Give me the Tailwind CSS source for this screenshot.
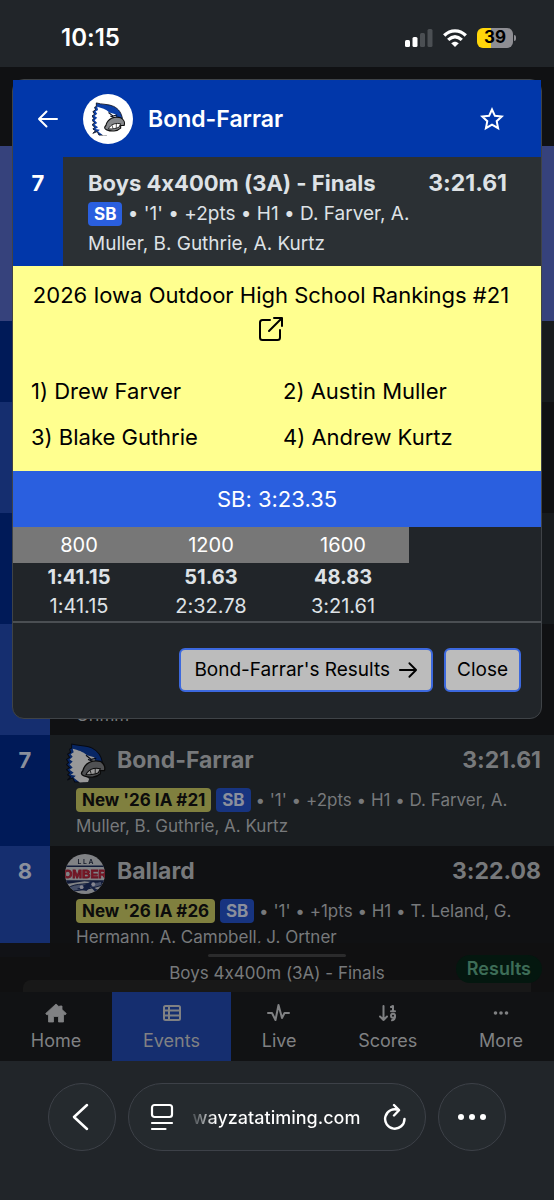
<!DOCTYPE html>
<html lang="en">
<head>
<meta charset="utf-8">
<meta name="viewport" content="width=device-width, initial-scale=1">
<title>Wayzata Timing</title>
<script src="https://cdn.jsdelivr.net/npm/@tailwindcss/browser@4"></script>
</head>
<body class="flex min-h-screen flex-col bg-[#212529] font-['Inter',sans-serif] text-[#dee2e6] [font-feature-settings:'calt'_0]">

<svg class="hidden" aria-hidden="true">
  <symbol id="bird" viewBox="0 0 38 39">
    <path d="M5 1C11 3 19 2 25 5C31 8 34 13 35 19L25 22L17 38L8 38L6 34L1 36L4 33L1 31L3 29L0 26L3 24L0 21L2 19L0 16L3 14L1 11L4 9L3 6L5 5Z" fill="#0b3fa8" stroke="#0a0f1e" stroke-width="1" stroke-linejoin="round"/>
    <path d="M6 5.500C11 7 16 8 20 12L27 14L28 18L20 24L17 30L22 35L21 38L13 38.500L7 34L9 32L4 31L7 29L3 26L6 24L3 21L6 18L3 16L6 13.500L4 11L7 9Z" fill="#fff"/>
    <path d="M19 12L24 16L29 15M21 16L26 18" stroke="#0a0f1e" stroke-width="1.200" fill="none"/>
    <path d="M16 27C18 19 26 16 33 18C37 20 38 24 37 27L33 27L33 30C29 34 22 34 17 32C14 31 14 29 16 27Z" fill="#85878a" stroke="#111" stroke-width="1.300"/>
    <path d="M20 29C23 25 28 24 33 25L31 29C28 30.500 24 31 19 31Z" fill="#fff" stroke="#111" stroke-width="1"/>
    <path d="M23 26.500L24 30M28 25L28 30" stroke="#111" stroke-width="0.800" fill="none"/>
  </symbol>
  <symbol id="arrow" viewBox="0 0 22 20">
    <path d="M2 10H20M12.500 2.500L20 10L12.500 17.500" fill="none" stroke="currentColor" stroke-width="2" stroke-linecap="round" stroke-linejoin="round"/>
  </symbol>
</svg>

<header class="flex h-[67px] shrink-0 items-center justify-between pt-2 pr-[38px] pl-[61px] text-white">
  <time class="text-[24px] font-semibold">10:15</time>
  <div class="flex items-center gap-2.5">
    <svg class="h-[18px] w-7" viewBox="0 0 28 18" aria-label="Signal">
      <rect x="0" y="11" width="5" height="7" rx="1.500" fill="#fff"/><rect x="7.500" y="8" width="5" height="10" rx="1.500" fill="#fff"/>
      <rect x="15" y="4" width="5" height="14" rx="1.500" fill="#4b4f53"/><rect x="22.500" y="0" width="5" height="18" rx="1.500" fill="#4b4f53"/>
    </svg>
    <svg class="h-[18px] w-6" viewBox="0 0 24 18" aria-label="Wi-Fi" fill="none" stroke="#fff" stroke-width="3.300">
      <path d="M1.200 6.500C7.500 0.300 16.500 0.300 22.800 6.500"/><path d="M5.200 10.900C9.500 6.900 14.500 6.900 18.800 10.900"/>
      <path d="M8.200 14.300C10.500 12.200 13.500 12.200 15.800 14.300L12 18Z" fill="#fff" stroke="none"/>
    </svg>
    <div class="flex items-center gap-px">
      <span class="flex h-5 w-9 items-center justify-center rounded-md bg-linear-to-r from-[#ffd60a] from-40% to-[#8e8e93] to-40% text-[17px] font-bold text-black">39</span>
      <span class="h-1.5 w-0.5 rounded-r bg-[#8e8e93]"></span>
    </div>
  </div>
</header>

<main class="relative flex flex-1 flex-col bg-[#101113]">
  <!-- Results list behind the dialog -->
  <div class="h-[79px] bg-[#101113]"></div>
  <div class="h-[175px] bg-[#36427c]"></div>
  <ol class="text-[#77797b]">
    <li class="flex h-[81px] bg-[#171b1e]"><span class="w-[50px] bg-[#001a58]"></span></li>
    <li class="flex h-[111px] bg-[#101113]"><span class="w-[50px] bg-[#152e6f]"></span></li>
    <li class="flex h-[111px] bg-[#171b1e]"><span class="w-[50px] bg-[#001a58]"></span></li>
    <li class="flex h-[111px] bg-[#101113]"><span class="w-[50px] bg-[#152e6f]"></span><span class="self-end pb-2 pl-[26px] text-[17px] leading-6">Grimm</span></li>
    <li class="flex h-[111px] bg-[#1a1e21]">
      <span class="w-[50px] shrink-0 bg-[#001a58] pt-2.5 text-center text-[22px] leading-[30px] font-bold text-[#8a8f9c]">7</span>
      <div class="flex-1 pt-2 pr-[13px]">
        <div class="flex items-center pl-4">
          <svg class="size-10 brightness-60" aria-hidden="true"><use href="#bird"/></svg>
          <h3 class="flex-1 pb-1.5 pl-[11px] text-[23px] leading-[30px] font-bold">Bond-Farrar</h3>
          <span class="pb-1.5 text-[23px] leading-[30px] font-bold">3:21.61</span>
        </div>
        <p class="mt-1 pr-4 pl-[26px] text-[17px] leading-[26px]"><b class="inline-block rounded bg-[#80803f] px-1.5 leading-6 text-[#0c0c0c]">New '26 IA #21</b> <b class="inline-block rounded bg-[#173480] px-1.5 leading-6 text-[#8a8f9c]">SB</b> • '1' • +2pts • H1 • D. Farver, A. Muller, B. Guthrie, A. Kurtz</p>
      </div>
    </li>
    <li class="flex h-[111px] bg-[#101113]">
      <span class="w-[50px] shrink-0 bg-[#152e6f] pt-2.5 text-center text-[22px] leading-[30px] font-bold text-[#8a8f9c]">8</span>
      <div class="flex-1 pt-2 pr-[13px]">
        <div class="flex items-center pl-[15px]">
          <svg class="size-10 brightness-60" viewBox="0 0 41 41" aria-hidden="true">
            <clipPath id="disc"><circle cx="20.500" cy="20.500" r="20.500"/></clipPath>
            <g clip-path="url(#disc)">
              <rect width="41" height="41" fill="#d5d8de"/>
              <text x="21" y="10" text-anchor="middle" font-size="7" font-weight="600" fill="#222b44">L L A</text>
              <path d="M0 12.500H41" stroke="#1c2c5c" stroke-width="1.500"/>
              <text x="20.500" y="25" text-anchor="middle" font-family="Liberation Sans" font-size="12" font-weight="bold" fill="#d3293d" stroke="#b01f38" stroke-width="0.800">OMBER</text>
              <path d="M0 27H41V30L20 28L0 31Z" fill="#1c2c5c"/>
              <path d="M3 35C10 29 25 32 37 28L38 32C29 35 18 37 8 38Z" fill="#7484ad" stroke="#1c2c5c"/>
              <path d="M12 36L27 28L31 29L22 38ZM25 32L34 37L31 39Z" fill="#22346b"/>
              <circle cx="17" cy="34" r="2" fill="#dde"/><circle cx="29" cy="31" r="2" fill="#dde"/>
            </g>
          </svg>
          <h3 class="flex-1 pb-1.5 pl-3 text-[23px] leading-[30px] font-bold">Ballard</h3>
          <span class="pb-1.5 text-[23px] leading-[30px] font-bold">3:22.08</span>
        </div>
        <p class="mt-1 pr-4 pl-[26px] text-[17px] leading-[26px]"><b class="inline-block rounded bg-[#80803f] px-1.5 leading-6 text-[#0c0c0c]">New '26 IA #26</b> <b class="inline-block rounded bg-[#173480] px-1.5 leading-6 text-[#8a8f9c]">SB</b> • '1' • +1pts • H1 • T. Leland, G. Hermann, A. Campbell, J. Ortner</p>
      </div>
    </li>
  </ol>

  <!-- Bottom sheet peek -->
  <div class="relative -mt-3.5 h-[49px] bg-[#111111]/95">
    <div class="absolute inset-x-[23px] bottom-0 h-3 rounded-tl-lg bg-[#181818]"></div>
    <div class="relative flex flex-col items-center pt-[11px]">
      <div class="h-[3px] w-[138px] rounded bg-[#2b2b2c]"></div>
      <p class="pt-1 text-[17px] leading-6 text-[#77797b]">Boys 4x400m (3A) - Finals</p>
    </div>
    <span class="absolute top-3 right-3 rounded-full bg-[#04170f] px-[11px] text-[18px] leading-7 font-semibold text-[#3d6d57]">Results</span>
  </div>

  <nav class="flex h-[69px] bg-[#111214] text-[18px] text-[#808183]">
    <a href="#home" class="flex flex-auto flex-col items-center gap-1 pt-[11px]">
      <svg class="h-5 w-[22px]" viewBox="0 0 22 20" fill="currentColor"><path d="M11 1L14.500 4.200V3H17V6.500L21.300 10.500L20 12L18.500 11V19H13.500V13.500H8.500V19H3.500V11L2 12L0.700 10.500Z" stroke="currentColor" stroke-linejoin="round" stroke-width="0.800"/></svg>
      Home</a>
    <a href="#events" class="flex flex-auto flex-col items-center gap-1 bg-[#152e6f] pt-[11px]">
      <svg class="h-5 w-5" viewBox="0 0 20 20" fill="none" stroke="currentColor" stroke-width="2"><rect x="2" y="3" width="16" height="14" rx="1.500"/><path d="M2 7.500H18M2 12.500H18M7 3V17"/></svg>
      Events</a>
    <a href="#live" class="flex flex-auto flex-col items-center gap-1 pt-[11px]">
      <svg class="h-5 w-6" viewBox="0 0 24 20" fill="none" stroke="currentColor" stroke-width="2" stroke-linecap="round" stroke-linejoin="round"><path d="M1 10H5L8.500 17L11.500 2L15 15L17.500 10H22"/></svg>
      Live</a>
    <a href="#scores" class="flex flex-auto flex-col items-center gap-1 pt-[11px]">
      <svg class="h-5 w-5" viewBox="0 0 20 20" fill="none" stroke="currentColor" stroke-width="2" stroke-linecap="round" stroke-linejoin="round"><path d="M5.500 3V17M2 13.500L5.500 17L9 13.500M13 4L15 3V8M13 8.300H17"/><circle cx="15" cy="12.700" r="2"/><path d="M17 13C17 15.500 16 17 14 17.300"/></svg>
      Scores</a>
    <a href="#more" class="flex flex-auto flex-col items-center gap-1 pt-[11px]">
      <svg class="h-5 w-5" viewBox="0 0 20 20" fill="currentColor"><circle cx="4.500" cy="10" r="1.800"/><circle cx="10" cy="10" r="1.800"/><circle cx="15.500" cy="10" r="1.800"/></svg>
      More</a>
  </nav>

  <!-- Team dialog -->
  <section role="dialog" aria-label="Bond-Farrar" class="absolute inset-x-3 top-3 rounded-xl border border-[#3f4347] bg-[#212529]">
    <div class="flex h-[77px] items-center bg-[#0137aa] pt-px pr-[37px] pl-6 text-white">
      <button type="button" aria-label="Back"><svg class="h-5 w-[22px] rotate-180"><use href="#arrow"/></svg></button>
      <span class="ml-6 flex size-[50px] items-center justify-center rounded-full bg-white"><svg class="h-[34px] w-[33px]" aria-hidden="true"><use href="#bird"/></svg></span>
      <h2 class="ml-[15px] flex-1 text-[23px] font-semibold">Bond-Farrar</h2>
      <button type="button" aria-label="Favorite"><svg class="size-6" viewBox="0 0 24 24" fill="none" stroke="currentColor" stroke-width="2"><path d="M12 2.500L14.900 8.800L21.800 9.500L16.700 14.200L18.100 21.200L12 17.700L5.900 21.200L7.300 14.200L2.200 9.500L9.100 8.800Z"/></svg></button>
    </div>
    <div class="flex h-[109px] bg-[#2b3034]">
      <span class="w-[50px] shrink-0 bg-[#0137aa] pt-[11px] text-center text-[22px] leading-[30px] font-bold text-white">7</span>
      <div class="flex-1 pt-[11px] pr-[34px] pl-[25px]">
        <div class="flex justify-between leading-[30px] font-bold"><h3 class="text-[22px]">Boys 4x400m (3A) - Finals</h3><span class="text-[23px]">3:21.61</span></div>
        <p class="pt-px pr-16 text-[19px] leading-[30px]"><b class="inline-block rounded bg-[#2a5fdf] px-1.5 text-[17px] leading-6 text-white">SB</b> • '1' • +2pts • H1 • D. Farver, A. Muller, B. Guthrie, A. Kurtz</p>
      </div>
    </div>
    <div class="h-[205px] bg-[#ffff8f] px-[18px] pt-3 text-[22px] text-black">
      <a href="#rankings" class="flex flex-col items-center pr-3 leading-[34px]">2026 Iowa Outdoor High School Rankings #21
        <svg class="mt-1 size-[26px]" viewBox="0 0 26 26" fill="none" stroke="currentColor" stroke-width="2" stroke-linecap="round" stroke-linejoin="round"><path d="M12 4H4.500Q2 4 2 6.500V21.500Q2 24 4.500 24H19.500Q22 24 22 21.500V14M11 15L24 2M16 2H24V10"/></svg>
      </a>
      <ul class="mt-[26px] grid grid-cols-2 gap-x-3 leading-[46px]">
        <li>1) Drew Farver</li><li>2) Austin Muller</li><li>3) Blake Guthrie</li><li>4) Andrew Kurtz</li>
      </ul>
    </div>
    <p class="bg-[#2a5fdf] text-center text-[22px] leading-[56px] text-white">SB: 3:23.35</p>
    <div class="border-b-2 border-[#4b4f53]">
      <table class="w-3/4 table-fixed text-center text-[20px]">
        <thead><tr class="h-9 bg-[#777777] text-white"><th class="font-normal">800</th><th class="font-normal">1200</th><th class="font-normal">1600</th></tr></thead>
        <tbody class="leading-[29px]">
          <tr class="font-bold"><td>1:41.15</td><td>51.63</td><td>48.83</td></tr>
          <tr><td>1:41.15</td><td>2:32.78</td><td>3:21.61</td></tr>
        </tbody>
      </table>
    </div>
    <div class="flex justify-end gap-[11px] pt-[25px] pr-5 pb-[26px] text-[19px] text-black">
      <button type="button" class="flex h-11 items-center gap-2 rounded-md border-2 border-[#3c68dd] bg-[#bcbcbc] px-[13px]">Bond-Farrar's Results <svg class="h-[18px] w-5" aria-hidden="true"><use href="#arrow"/></svg></button>
      <button type="button" class="h-11 rounded-md border-2 border-[#3c68dd] bg-[#bcbcbc] px-[11px]">Close</button>
    </div>
  </section>
</main>

<footer class="flex h-[139px] shrink-0 gap-3 px-12 pt-[22px] text-white">
  <button type="button" aria-label="Back" class="flex size-[68px] shrink-0 items-center justify-center rounded-full border border-[#3d4148] bg-[#252a2e]">
    <svg class="h-7 w-5" viewBox="0 0 20 28" fill="none" stroke="currentColor" stroke-width="2.500" stroke-linecap="round" stroke-linejoin="round"><path d="M15 2L2 14L15 26"/></svg>
  </button>
  <div class="flex h-[68px] flex-1 items-center rounded-full border border-[#3d4148] bg-[#252a2e] pr-[18px] pl-[21px]">
    <button type="button" aria-label="Page menu"><svg class="h-7 w-6" viewBox="0 0 24 28" fill="none" stroke="currentColor" stroke-width="2.200" stroke-linecap="round"><rect x="2" y="2" width="20" height="12" rx="2.500"/><path d="M2 20H22M2 26H15.500"/></svg></button>
    <span class="flex-1 bg-linear-to-r from-[#555a5e] from-10% to-white to-20% bg-clip-text pr-1 text-center text-[18px] font-medium text-transparent">wayzatatiming.com</span>
    <button type="button" aria-label="Reload"><svg class="h-7 w-6" viewBox="0 0 24 28" fill="none" stroke="currentColor" stroke-width="2.400" stroke-linecap="round" stroke-linejoin="round"><path d="M21.500 16A9.700 9.700 0 1 1 15.500 7M11 2L16 7.200L11 12.500"/></svg></button>
  </div>
  <button type="button" aria-label="More" class="flex size-[68px] shrink-0 items-center justify-center rounded-full border border-[#3d4148] bg-[#252a2e]">
    <svg class="h-2 w-7" viewBox="0 0 28 8" fill="currentColor"><circle cx="3" cy="4" r="3"/><circle cx="14" cy="4" r="3"/><circle cx="25" cy="4" r="3"/></svg>
  </button>
</footer>
</body>
</html>
